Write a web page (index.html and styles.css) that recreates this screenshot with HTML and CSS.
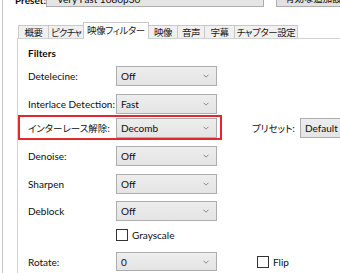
FILE: index.html
```html
<!DOCTYPE html>
<html lang="ja">
<head>
<meta charset="utf-8">
<link rel="stylesheet" href="styles.css">
</head>
<body>
<div class="app">
  <div class="rail"></div>
  <div class="content">
    <div class="top">
      <span class="preset-title">Preset:</span>
      <div class="top-combo">Very Fast 1080p30</div>
      <div class="top-btn"><span class="ja">有効な追加設定</span></div>
    </div>
    <div class="tabstrip">
      <div class="tab t-summary"><span class="ja">概要</span></div>
      <div class="tab t-picture"><span class="ja">ピクチャ</span></div>
      <div class="tab active t-filter"><span class="ja">映像フィルター</span></div>
      <div class="tab t-video"><span class="ja">映像</span></div>
      <div class="tab t-audio"><span class="ja">音声</span></div>
      <div class="tab t-sub"><span class="ja">字幕</span></div>
      <div class="tab t-chapter"><span class="ja">チャプター設定</span></div>
    </div>
    <div class="panel">
      <div class="heading">Filters</div>
      <div class="row r-detel">
        <span class="label">Detelecine:</span>
        <div class="combo"><span>Off</span><svg class="chev" width="6" height="4" viewBox="0 0 6 4"><polyline points="0.5,0.7 3,3.2 5.5,0.7" fill="none" stroke="#8a8a8a" stroke-width="1"/></svg></div>
      </div>
      <div class="row r-inter">
        <span class="label">Interlace Detection:</span>
        <div class="combo"><span>Fast</span><svg class="chev" width="6" height="4" viewBox="0 0 6 4"><polyline points="0.5,0.7 3,3.2 5.5,0.7" fill="none" stroke="#8a8a8a" stroke-width="1"/></svg></div>
      </div>
      <div class="row r-decomb highlight">
        <span class="label"><span class="ja">インターレース解除:</span></span>
        <div class="combo"><span>Decomb</span><svg class="chev" width="6" height="4" viewBox="0 0 6 4"><polyline points="0.5,0.7 3,3.2 5.5,0.7" fill="none" stroke="#8a8a8a" stroke-width="1"/></svg></div>
        <span class="preset-label"><span class="ja">プリセット:</span></span>
        <div class="combo wide"><span>Default</span></div>
      </div>
      <div class="row r-denoise">
        <span class="label">Denoise:</span>
        <div class="combo"><span>Off</span><svg class="chev" width="6" height="4" viewBox="0 0 6 4"><polyline points="0.5,0.7 3,3.2 5.5,0.7" fill="none" stroke="#8a8a8a" stroke-width="1"/></svg></div>
      </div>
      <div class="row r-sharpen">
        <span class="label">Sharpen</span>
        <div class="combo"><span>Off</span><svg class="chev" width="6" height="4" viewBox="0 0 6 4"><polyline points="0.5,0.7 3,3.2 5.5,0.7" fill="none" stroke="#8a8a8a" stroke-width="1"/></svg></div>
      </div>
      <div class="row r-deblock">
        <span class="label">Deblock</span>
        <div class="combo"><span>Off</span><svg class="chev" width="6" height="4" viewBox="0 0 6 4"><polyline points="0.5,0.7 3,3.2 5.5,0.7" fill="none" stroke="#8a8a8a" stroke-width="1"/></svg></div>
      </div>
      <div class="row r-gray">
        <span class="label"></span>
        <span class="check"></span><span class="check-text">Grayscale</span>
      </div>
      <div class="row r-rotate">
        <span class="label">Rotate:</span>
        <div class="combo"><span>0</span><svg class="chev" width="6" height="4" viewBox="0 0 6 4"><polyline points="0.5,0.7 3,3.2 5.5,0.7" fill="none" stroke="#8a8a8a" stroke-width="1"/></svg></div>
        <span class="check flip"></span><span class="check-text">Flip</span>
      </div>
    </div>
  </div>
</div>
</body>
</html>
```

FILE: styles.css
```css
html, body {
  margin: 0;
  padding: 0;
}
body {
  width: 340px;
  height: 273px;
  overflow: hidden;
  background: #ffffff;
  font-family: Lato, "Noto Sans CJK JP", sans-serif;
  font-size: 10px;
  color: #0d0d0d;
}
.ja {
  font-family: "Noto Sans CJK JP", sans-serif;
  font-size: 9.5px;
  font-feature-settings: "palt" 1;
}
.app {
  display: flex;
  height: 273px;
}
.rail {
  width: 2px;
  flex: none;
  border-right: 1px solid #c6c6c6;
}
.content {
  flex: 1;
  min-width: 0;
  display: flex;
  flex-direction: column;
}
.top {
  display: flex;
  height: 16px;
  margin-top: -9px;
  padding-left: 12px;
  white-space: nowrap;
}
.preset-title {
  width: 43px;
  font-weight: bold;
  align-self: flex-end;
  line-height: 10px;
  height: 12px;
}
.top-combo {
  width: 218px;
  flex: none;
  border: 1px solid #adadad;
  background: #e5e5e5;
  padding-left: 10px;
  box-sizing: border-box;
  line-height: 14px;
  overflow: hidden;
}
.top-btn {
  margin-left: 12px;
  width: 80px;
  flex: none;
  border: 1px solid #adadad;
  background: #e1e1e1;
  box-sizing: border-box;
  padding-left: 8px;
  line-height: 12px;
  overflow: hidden;
}
.tabstrip {
  display: flex;
  align-items: flex-end;
  margin-top: 15px;
  padding-left: 15px;
  height: 16px;
  position: relative;
  z-index: 1;
  white-space: nowrap;
}
.tab {
  box-sizing: border-box;
  height: 13px;
  line-height: 12px;
  display: flex;
  justify-content: center;
  border: 1px solid #c9c9c9;
  border-bottom: none;
  border-left: none;
  background: #f0f0f0;
  color: #1a1a1a;
  letter-spacing: -0.4px;
}
.tab:first-child {
  border-left: 1px solid #c9c9c9;
}
.t-summary { width: 31px; }
.t-picture { width: 35px; letter-spacing: -0.9px; }
.t-filter { width: 66px; }
.t-video { width: 29px; }
.t-audio { width: 27px; }
.t-sub { width: 30px; }
.t-chapter { width: 63px; }
.tab.active {
  height: 17px;
  line-height: 15px;
  background: #ffffff;
  margin-bottom: -1px;
  border-left: 1px solid #c9c9c9;
  margin-left: -1px;
}
.panel {
  flex: 1;
  margin-left: 14px;
  border-left: 1px solid #d2d2d2;
  border-top: 1px solid #d2d2d2;
  background: #ffffff;
  padding: 7px 0 0 10px;
}
.heading {
  font-weight: bold;
  line-height: 14px;
  height: 14px;
}
.row {
  display: flex;
  align-items: center;
  height: 20px;
  white-space: nowrap;
}
.label {
  width: 88px;
  flex: none;
}
.r-detel { margin-top: 6px; }
.r-inter { margin-top: 8px; }
.r-decomb { margin-top: 4px; }
.r-denoise { margin-top: 8px; }
.r-sharpen { margin-top: 8px; }
.r-deblock { margin-top: 7px; }
.r-gray { margin-top: 8px; height: 12px; }
.r-rotate { margin-top: 11px; height: 19px; }
.combo {
  width: 101px;
  height: 100%;
  flex: none;
  box-sizing: border-box;
  border: 1px solid #adadad;
  background: linear-gradient(#ededed, #e4e4e4);
  display: flex;
  align-items: center;
  justify-content: space-between;
  padding: 0 7px 0 4px;
}
.combo.wide {
  width: 80px;
}
.chev {
  display: block;
}
.highlight {
  position: relative;
}
.highlight::after {
  content: "";
  position: absolute;
  left: -10px;
  top: -3px;
  width: 204px;
  height: 25px;
  box-sizing: border-box;
  border: 2px solid #e5262e;
}
.preset-label {
  margin-left: 35px;
  margin-right: 5px;
}
.check {
  width: 12px;
  height: 12px;
  box-sizing: border-box;
  border: 1px solid #333333;
  background: #ffffff;
  flex: none;
}
.check.flip {
  margin-left: 40px;
}
.check-text {
  margin-left: 4px;
}
```
